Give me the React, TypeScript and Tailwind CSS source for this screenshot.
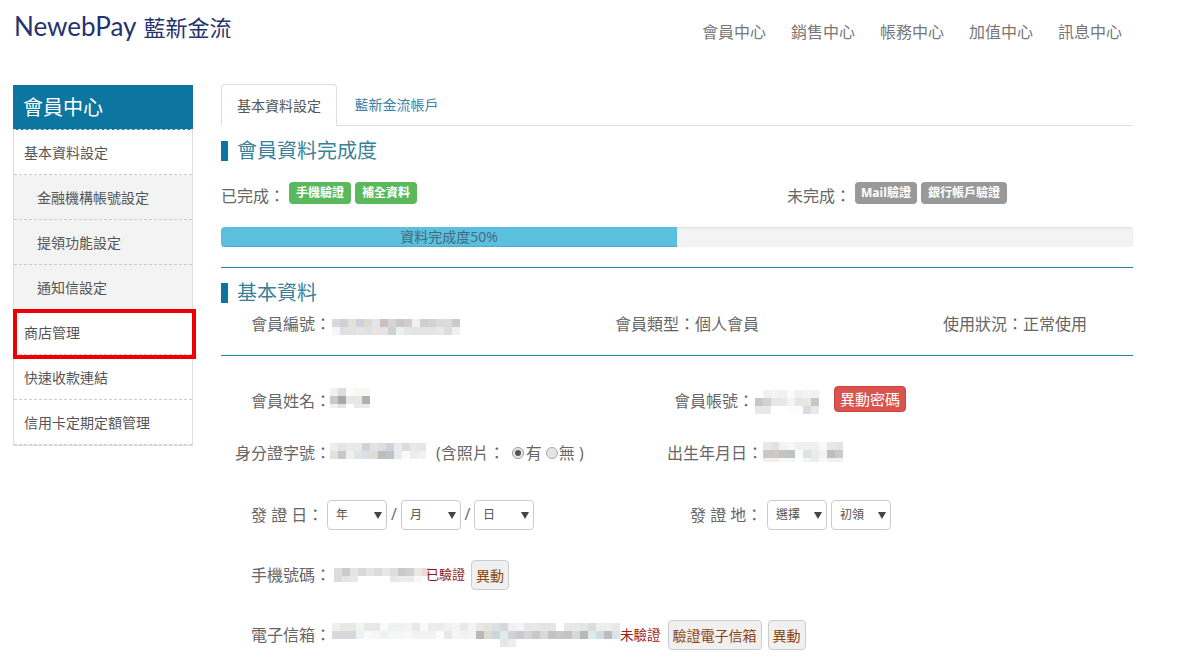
import React from "react";

const FONT = "font-['Open_Sans','Noto_Sans_CJK_TC',sans-serif]";

function Mosaic({ rows, last = 8, className = "" }: { rows: string[]; last?: number; className?: string }) {
  return (
    <div className={`flex shrink-0 flex-col ${className}`}>
      {rows.map((r, i) => (
        <div key={i} className="flex">
          {r.split(" ").map((c, j) => (
            <div
              key={j}
              className="w-2"
              style={{ height: i === rows.length - 1 ? last : 8, background: "#" + c }}
            />
          ))}
        </div>
      ))}
    </div>
  );
}

function Heading({ children }: { children: React.ReactNode }) {
  return (
    <div className="flex h-5 items-center gap-[9px]">
      <div className="h-5 w-[7px] bg-[#0d76a0]" />
      <div className="text-[20px] leading-5 text-[#3a7f99]">{children}</div>
    </div>
  );
}

function Label({ className, children }: { className: string; children: React.ReactNode }) {
  return (
    <span className={`flex h-[22px] items-center rounded-[4px] text-[12px] font-bold leading-none text-white ${className}`}>
      {children}
    </span>
  );
}

function Select({ label, className = "" }: { label: string; className?: string }) {
  return (
    <div className={`relative flex h-[30px] w-[60px] shrink-0 items-center rounded-[4px] border border-[#ccc] bg-white pl-2 text-[12px] text-[#555] ${className}`}>
      {label}
      <svg className="absolute right-[4px] top-[11px]" width="8" height="7" viewBox="0 0 8 7">
        <path d="M0 0H8L4 7Z" fill="#444" />
      </svg>
    </div>
  );
}

function Btn({ children, className = "" }: { children: React.ReactNode; className?: string }) {
  return (
    <div className={`flex h-[30px] items-center justify-center rounded-[4px] border border-[#ccc] bg-[#f0f0f0] text-[14px] text-[#8a4510] ${className}`}>
      {children}
    </div>
  );
}

const side: [string, boolean][] = [
  ["基本資料設定", false],
  ["金融機構帳號設定", true],
  ["提領功能設定", true],
  ["通知信設定", true],
  ["商店管理", false],
  ["快速收款連結", false],
  ["信用卡定期定額管理", false],
];

export default function App() {
  return (
    <div className={`h-[668px] w-[1204px] overflow-hidden bg-white text-[16px] text-[#666] ${FONT}`}>
      <header className="flex h-[84px] items-start">
        <div className="ml-[14px] mt-[10px] flex items-baseline gap-[7px] text-[#24336f]">
          <span className="font-['Lato',sans-serif] text-[26px] leading-8">NewebPay</span>
          <span className="text-[22px] leading-8">藍新金流</span>
        </div>
        <nav className="ml-auto mr-[82px] mt-[20px] flex gap-[25px] text-[16px] leading-6 text-[#777]">
          <span>會員中心</span>
          <span>銷售中心</span>
          <span>帳務中心</span>
          <span>加值中心</span>
          <span>訊息中心</span>
        </nav>
      </header>

      <div className="flex items-start gap-[28px] pl-[13px]">
        {/* sidebar */}
        <aside className="relative mt-px w-[180px] border-x border-b border-[#ddd]">
          <div className="-mx-px flex h-[45px] items-center border-b border-dashed border-[#cfe2ea] bg-[#0d76a0] pb-px pl-[10px] pt-[2px] text-[20px] text-white">
            會員中心
          </div>
          {side.map(([t, sub]) => (
            <div
              key={t}
              className={`flex h-[45px] items-center border-b border-dashed border-[#ccc] text-[14px] text-[#555] ${
                sub ? "bg-[#f3f3f3] pl-[23px]" : "pl-[10px]"
              }`}
            >
              {t}
            </div>
          ))}
          <div className="absolute left-[-1px] top-[224px] h-[50px] w-[183px] border-4 border-[#ee0000]" />
        </aside>

        {/* content */}
        <main className="w-[912px]">
          <div className="flex h-[42px] border-b border-[#ddd]">
            <div className="-mb-px flex h-[42px] w-[116px] items-center justify-center rounded-t-[4px] border border-[#ddd] border-b-white bg-white text-[14px] text-[#555]">
              基本資料設定
            </div>
            <div className="flex w-[119px] items-center justify-center text-[14px] text-[#3d80a8]">藍新金流帳戶</div>
          </div>

          <div className="mt-[15px]">
            <Heading>會員資料完成度</Heading>
          </div>

          <div className="mt-[21px] flex h-[22px] items-center">
            <div className="flex w-[566px] items-center">
              <span className="mt-[5px] w-[68px]">已完成：</span>
              <div className="flex gap-1">
                <Label className="bg-[#5cb85c] px-[7px]">手機驗證</Label>
                <Label className="bg-[#5cb85c] px-[7px]">補全資料</Label>
              </div>
            </div>
            <span className="mt-[5px] w-[68px]">未完成：</span>
            <div className="flex gap-1">
              <Label className="bg-[#999] px-[6px]">Mail驗證</Label>
              <Label className="bg-[#999] px-[7px]">銀行帳戶驗證</Label>
            </div>
          </div>

          <div className="mt-[23px] h-5 overflow-hidden rounded-[4px] bg-[#f3f3f3] shadow-[inset_0_1px_2px_rgba(0,0,0,0.1)]">
            <div className="flex h-5 w-1/2 items-center justify-center border-b border-[#4fa9c4] bg-[#5bc0de] text-[14px] text-[#44697a]">
              資料完成度50%
            </div>
          </div>

          <div className="mt-5 h-px bg-[#1a8aa6]" />

          <div className="mt-[15px]">
            <Heading>基本資料</Heading>
          </div>

          <div className="mt-[9px] flex h-6 items-center leading-6">
            <div className="flex w-[394px] items-center pl-[30px]">
              <span className="w-[81px] whitespace-nowrap">會員編號：</span>
              <Mosaic
                className="translate-y-[3px]"
                rows={[
                  "d8d8df d0d0d8 e2e2da ccd2d6 dedbd0 e4e4ec cfc0c0 d8d4d6 c8c8c8 d4cccc f2f2f2 ccd0d2 d0d4d6 d8dcd8 dcdcd8 c8ccc8",
                  "f4f4fa e0e0e0 e0e2e0 e4e4e4 e0e0e0 e8e4e2 e4e4e4 d0d0d0 ecf0f0 e4e8e4 e4e4e4 e4e4e4 e4e4e4 e8e8e8 dcdcdc ecf0f0",
                ]}
              />
            </div>
            <span className="w-[328px]">會員類型：個人會員</span>
            <span>使用狀況：正常使用</span>
          </div>

          <div className="mt-[19px] h-px bg-[#1a8aa6]" />

          {/* row 1 */}
          <div className="mt-[30px] flex h-[30px] items-center">
            <div className="flex w-[453px] items-center pl-[30px]">
              <span className="w-[79px] whitespace-nowrap">會員姓名：</span>
              <Mosaic
                className="-translate-y-[3px]"
                rows={[
                  "f2f0ee dcdde0 fcfcf8 f8f8f4 f8f8f8",
                  "c8c8c4 a8a8a8 e4e8e8 e8e8e0 b0b0b4",
                  "f0f0f0 e4e4e0 ffffff eaeaea e8ecec",
                ]}
                last={4}
              />
            </div>
            <span className="w-[81px] whitespace-nowrap">會員帳號：</span>
            <Mosaic
              className="translate-y-px"
              rows={[
                "ffffff f0f0f0 f4f4f4 f0f2f2 fafafa f0f0f0 f4f4f4 f2f2f2",
                "c4c8c8 d4d2cc e4e8e8 e8eaea f2f4f4 e4e6e6 e6e8e8 c8c8c0",
                "e8e8e8 e8e8e8 ffffff ffffff fcfcfc fcfcfc d8dce0 e8e8e8",
              ]}
            />
            <div className="ml-[15px] flex h-[26px] w-[72px] -translate-y-[2px] items-center justify-center rounded-[4px] border border-[#d43f3a] bg-[#d9534f] text-[15px] text-white">
              異動密碼
            </div>
          </div>

          {/* row 2 */}
          <div className="mt-[22px] flex h-[30px] items-center">
            <div className="flex w-[446px] items-center pl-[14px]">
              <span className="w-[95px] whitespace-nowrap">身分證字號：</span>
              <Mosaic
                className="-translate-y-[2px]"
                rows={[
                  "f0ece8 e4e6e6 e8eaea e8eaea ced2da e2e2e6 dcdee0 d0d2d8 e8ecec dcdcdc e8e8e8 e6e6e6",
                  "e4e0dc c8c8c8 eef0ec e0e4e4 dce0e4 dcdcd4 bcbeb8 c0c4c8 e8ecee fafafa ecedee f0f2f4",
                ]}
              />
              <span className="ml-[10px] whitespace-nowrap">(含照片：</span>
              <span className="ml-[7px] flex h-3 w-3 items-center justify-center rounded-full border border-[#999] bg-[#e8e8e8]">
                <span className="h-[6px] w-[6px] rounded-full bg-[#555]" />
              </span>
              <span className="ml-[2px]">有</span>
              <span className="ml-[4px] h-3 w-3 rounded-full border border-[#aaa] bg-[#e4e4e4]" />
              <span className="ml-px whitespace-nowrap">無 )</span>
            </div>
            <span className="w-[96px] whitespace-nowrap">出生年月日：</span>
            <Mosaic
              className="-translate-y-px"
              rows={[
                "e8e8e8 e2e2e2 f2f4f2 f8f8f8 f0f0f0 f0f0f0 f0f0ee f8fafa e8e8e8 e4e4e4",
                "ccc8c4 cec8c4 c4c4c4 bec4c4 fafcfa dde2e4 e8ecec f2f2f2 bcc0b8 cec8c8",
                "f0f0f0 f0f0f0 f8f8f8 f8f8f8 ffffff f4f4f4 ececec fafafa f0f0f0 f0f0f0",
              ]}
              last={4}
            />
          </div>

          {/* row 3 */}
          <div className="mt-[32px] flex h-[30px] items-center">
            <div className="flex w-[469px] items-center pl-[30px]">
              <span className="w-[76px] whitespace-nowrap">發 證 日：</span>
              <Select label="年" />
              <span className="w-[14px] -translate-y-px text-center">/</span>
              <Select label="月" />
              <span className="w-[13px] -translate-y-px text-center">/</span>
              <Select label="日" />
            </div>
            <span className="w-[77px] whitespace-nowrap">發 證 地：</span>
            <Select label="選擇" />
            <Select label="初領" className="ml-1" />
          </div>

          {/* row 4 */}
          <div className="mt-[30px] flex h-[30px] items-center pl-[30px]">
            <span className="w-[83px] whitespace-nowrap">手機號碼：</span>
            <Mosaic
              rows={[
                "dcdddd c8cccc e4e4e4 d8dada e4e4e4 dcdcdc e8e8e8 dcdee0 c8ccc8 d0d0d0 e8e8e8 f0d8d8",
                "dcdcdc e4e4e4 e8e8e8 ffffff ffffff ffffff ffffff e8e8e8 ececec ececec f8f8f8 ffffff",
              ]}
              last={6}
            />
            <span className="-ml-[4px] text-[13px] text-[#8b1a1a]">已驗證</span>
            <Btn className="ml-[6px] w-[38px]">異動</Btn>
          </div>

          {/* row 5 */}
          <div className="mt-[30px] flex h-[30px] items-center pl-[30px]">
            <span className="w-[81px] whitespace-nowrap">電子信箱：</span>
            <Mosaic
              rows={[
                "f0f0ee e8e8e4 e8e8e4 f4f4f0 e8eaea e8e8e8 fafafa eef2f2 eef2f2 f4f4f4 e8e8e8 fafafa ececea ececea eef2f2 f4f6f4 e8eaea f4f4f4 e8e8e4 e4e4e0 dce0e0 d4d8d8 f0f0f0 f4f4f4 e8e8e8 e8e8e8 e4e6e6 e4e6e6 ffffff e8e8e8 e8e8e8 e4e6e6 dcdcd8 eeeeee eeeeee e8e8ec",
                "d8d8d8 d8d8dc d0dcdc eef2f2 fafafa f6f6f6 eef2f2 f6f6f6 f6f6f6 f8f8f8 f2f4f4 f2f2f2 f2f2f0 fcfcfc e8e8e8 f6f6f6 f2f2f2 f4f4f4 b8b8b8 dcdcd4 ccd8d8 e0ecec d0d4d8 c8ccc8 d4d4e0 c8c8c4 d8dad8 c4c4be c8c8c8 c4c4c4 d4dada b8b8b4 dcecec d0dce0 bcbcb8 d8e4e8",
                "ffffff ffffff ffffff ffffff ffffff ffffff ffffff ffffff ffffff ffffff ffffff ffffff ffffff ffffff ffffff ffffff ffffff ffffff ffffff ffffff ffffff e4e8e8 eeeeee ffffff ffffff ffffff ffffff ffffff ffffff ffffff ffffff ffffff ffffff ffffff ffffff ffffff",
              ]}
            />
            <span className="text-[13.5px] text-[#a01c1c]">未驗證</span>
            <Btn className="ml-[7px] w-[94px]">驗證電子信箱</Btn>
            <Btn className="ml-[6px] w-[38px]">異動</Btn>
          </div>
        </main>
      </div>
    </div>
  );
}
